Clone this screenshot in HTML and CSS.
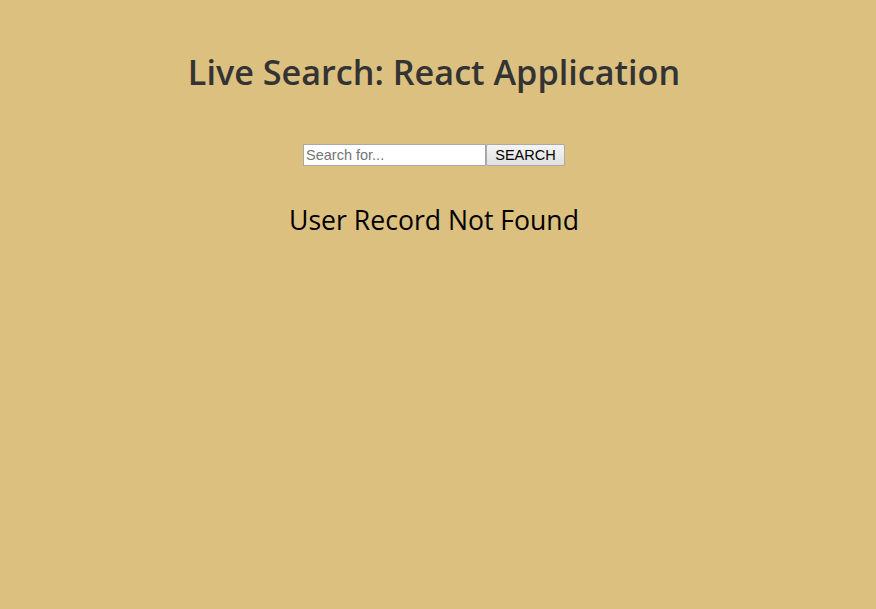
FILE: index.html
```html
<!DOCTYPE html>
<html>
<head>
<meta charset="utf-8">
<link rel="stylesheet" href="styles.css">
</head>
<body>
<div class="app">
  <h1 class="title">Live Search: React Application</h1>
  <form class="search">
    <input class="search-input" type="text" placeholder="Search for...">
    <button class="search-btn" type="button">SEARCH</button>
  </form>
  <p class="message">User Record Not Found</p>
</div>
</body>
</html>
```
FILE: styles.css
```css
html, body {
  margin: 0;
  padding: 0;
  background: #dcc080;
  min-height: 100%;
}
body {
  font-family: "Open Sans", sans-serif;
}
.app {
  display: flex;
  flex-direction: column;
  align-items: center;
  padding-top: 49px;
  padding-right: 8px;
}
.title {
  margin: 0;
  font-size: 34.2px;
  font-weight: 600;
  color: #333;
  line-height: 46px;
}
.search {
  display: flex;
  margin-top: 49px;
}
.search-input {
  box-sizing: border-box;
  width: 183px;
  height: 22px;
  margin: 0;
  padding: 1px 2px;
  border: 1px solid #a9a9a9;
  font-family: "Liberation Sans", Arial, sans-serif;
  font-size: 14.5px;
  background: #fff;
  outline: none;
}
.search-input::placeholder {
  color: #757575;
}
.search-btn {
  box-sizing: border-box;
  width: 79px;
  height: 22px;
  margin: 0;
  padding: 0 6px;
  border: 1px solid #a9a9a9;
  border-radius: 2px;
  background: linear-gradient(#f4f4f4, #e1e1e1);
  font-family: "Liberation Sans", Arial, sans-serif;
  font-size: 14.5px;
  color: #000;
}
.message {
  margin: 36px 0 0;
  font-size: 26.6px;
  line-height: 36px;
  color: #000;
}
```
